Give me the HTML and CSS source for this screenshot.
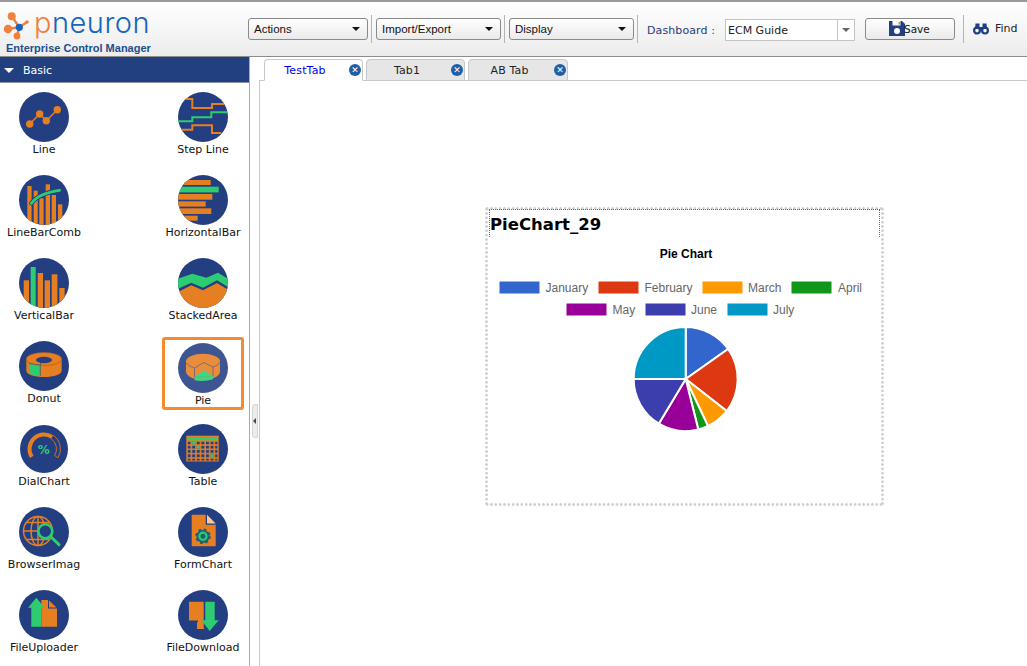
FILE: index.html
```html
<!DOCTYPE html>
<html lang="en">
<head>
<meta charset="utf-8">
<title>pneuron Enterprise Control Manager</title>
<link rel="stylesheet" href="styles.css">
</head>
<body>
<header class="topbar">
  <div class="brand">
    <div class="logo">
      <svg class="logo-mark" viewBox="0 0 32 36" width="32" height="36">
        <g stroke="#f0803c" stroke-width="2.4" fill="none">
          <path d="M11.7 12.3 19.3 23.3M8 25 19.3 23.3M17 32 19.3 23.3M27 18 19.3 23.3"/>
        </g>
        <circle cx="11.7" cy="12.3" r="4" fill="#f0803c"/>
        <circle cx="8" cy="25" r="4.2" fill="#f0803c"/>
        <circle cx="17" cy="32" r="3.4" fill="#f0803c"/>
        <circle cx="27" cy="18" r="1.8" fill="#f0803c"/>
        <circle cx="19.3" cy="23.3" r="3.6" fill="#1565c0"/>
      </svg>
      <span class="logo-word"><span class="logo-p">p</span>neuron</span>
    </div>
    <div class="brand-sub">Enterprise Control Manager</div>
  </div>
  <div class="tool select w120"><span>Actions</span><i class="caret"></i></div>
  <b class="sep"></b>
  <div class="tool select w125"><span>Import/Export</span><i class="caret"></i></div>
  <b class="sep"></b>
  <div class="tool select w125"><span>Display</span><i class="caret"></i></div>
  <b class="sep"></b>
  <label class="dash-label">Dashboard :</label>
  <div class="combo"><span class="combo-text">ECM Guide</span><span class="combo-btn"><i class="caret gray"></i></span></div>
  <div class="tool save">
    <svg class="save-icon" viewBox="0 0 16 15" width="16" height="15">
      <path d="M0 0H13L16 3V15H0Z" fill="#233f82"/>
      <rect x="3.5" y="0" width="8" height="4.5" fill="#fff"/>
      <rect x="9.5" y="1" width="1.5" height="2.5" fill="#e67e22"/>
      <circle cx="8" cy="10" r="3" fill="#fff"/>
    </svg>
    <span>Save</span>
  </div>
  <b class="sep sep-find"></b>
  <div class="find">
    <svg viewBox="0 0 16 13" width="16" height="13">
      <g fill="none" stroke="#233f82" stroke-width="2.2">
        <circle cx="4" cy="8.6" r="2.9"/>
        <circle cx="12" cy="8.6" r="2.9"/>
      </g>
      <path d="M2.5 1.5H6.5V7H2ZM9.5 1.5H13.5L14 7H9.5Z M6 5H10V8.5H6Z" fill="#233f82"/>
    </svg>
    <span>Find</span>
  </div>
</header>

<div class="body">
  <aside class="sidebar">
    <div class="panel-head"><i class="caret white"></i><span>Basic</span></div>
    <div class="palette">
      <div class="item">
        <svg class="icon" viewBox="0 0 50 50">
          <path d="M10.7 32 20.7 22 27.3 28.7 38.3 17.7" fill="none" stroke="#e67e22" stroke-width="1.5"/>
          <g fill="#e67e22"><circle cx="10.7" cy="32" r="3.7"/><circle cx="20.7" cy="22" r="3.7"/><circle cx="27.3" cy="28.7" r="3.7"/><circle cx="38.3" cy="17.7" r="3.7"/></g>
        </svg>
        <span>Line</span>
      </div>
      <div class="item">
        <svg class="icon" viewBox="0 0 50 50">
          <g fill="none" stroke-width="2">
            <path d="M6.7 7H14.3V16H34V12H50M1.7 37.7H14.3V33.3H34V41H43.3" stroke="#e67e22"/>
            <path d="M0 29.3H14.3V25.3H33.3V20.3H50" stroke="#2ecc71"/>
          </g>
        </svg>
        <span>Step Line</span>
      </div>
      <div class="item">
        <svg class="icon" viewBox="0 0 50 50">
          <g fill="#e67e22">
            <rect x="8.3" y="11" width="4.3" height="39"/><rect x="14.7" y="15.7" width="4" height="35"/><rect x="20.3" y="23.3" width="4.3" height="27"/><rect x="26.7" y="9.3" width="4.3" height="41"/><rect x="32.7" y="20" width="4.3" height="30"/><rect x="39" y="29.3" width="4.3" height="21"/>
          </g>
          <path d="M12.3 28.3Q20 18 40.7 15.3" fill="none" stroke="#233f82" stroke-width="4.4" stroke-linecap="round"/>
          <path d="M12.3 28.3Q20 18 40.7 15.3" fill="none" stroke="#2ecc71" stroke-width="2.8" stroke-linecap="round"/>
        </svg>
        <span>LineBarComb</span>
      </div>
      <div class="item">
        <svg class="icon" viewBox="0 0 50 50">
          <g fill="#e67e22">
            <rect x="5" y="5" width="27.7" height="5"/><rect x="0" y="19" width="34.3" height="5.7"/><rect x="0" y="26.3" width="27.7" height="5.3"/><rect x="0" y="33.3" width="33.3" height="5.7"/><rect x="0" y="40.7" width="19.7" height="5"/>
          </g>
          <rect x="1.7" y="11.7" width="39" height="5.7" fill="#2ecc71"/>
        </svg>
        <span>HorizontalBar</span>
      </div>
      <div class="item">
        <svg class="icon" viewBox="0 0 50 50">
          <g fill="#e67e22">
            <rect x="4.7" y="22.3" width="5.3" height="28"/><rect x="18.7" y="15" width="5.3" height="35"/><rect x="25.7" y="22.3" width="5.3" height="28"/><rect x="32.7" y="16.3" width="5.7" height="34"/><rect x="40.3" y="30" width="5.3" height="20"/>
          </g>
          <rect x="11.7" y="9" width="5" height="41" fill="#2ecc71"/>
        </svg>
        <span>VerticalBar</span>
      </div>
      <div class="item">
        <svg class="icon" viewBox="0 0 50 50">
          <path d="M0 20.7 14.3 15.7 28.3 19.7 40 14.7 50 20.7V29L39 22.3 25 29.7 13.3 24.7 0 30.7Z" fill="#2ecc71"/>
          <path d="M0 34 13.3 27.3 25 32.3 39 25 50 31.7V50H0Z" fill="#e67e22"/>
        </svg>
        <span>StackedArea</span>
      </div>
      <div class="item">
        <svg class="icon" viewBox="0 0 50 50">
          <path d="M7.3 18V29.7C7.3 33 15 36 25 36S42.700 33 42.700 29.700V18Z" fill="#e67e22"/>
          <ellipse cx="25" cy="18" rx="17.700" ry="6.500" fill="#e67e22" stroke="#b8621a" stroke-width=".5"/>
          <ellipse cx="25" cy="19" rx="8" ry="3.300" fill="#233f82"/>
          <path d="M10 22.500 21.300 24V35.300Q14 35 10 31.500Z" fill="#2ecc71"/>
          <path d="M10 22.500 21.300 24 22 21.500M21.300 24V35.300" fill="none" stroke="#233f82" stroke-width=".6"/>
          <path d="M7.300 18C7.300 22 15 24.500 25 24.500S42.700 22 42.700 18" fill="none" stroke="#b8621a" stroke-width=".5"/>
        </svg>
        <span>Donut</span>
      </div>
      <div class="item selected">
        <svg class="icon" viewBox="0 0 50 50">
          <path d="M8 18.300V28.500C8 33 16 37 25 37S42 33 42 28.500V18.300Z" fill="#e67e22"/>
          <ellipse cx="25" cy="18.300" rx="17" ry="7.500" fill="#e67e22"/>
          <path d="M8 19.500C10 22.500 13 24 16.500 25L25.700 19.500 35 24C38 23 41 21.500 42 19" fill="none" stroke="#233f82" stroke-width=".6"/>
          <path d="M16.500 25V34.500M35 24V33.300" fill="none" stroke="#233f82" stroke-width=".6"/>
          <path d="M25.700 27 35 33 35 36.300Q26 39 16.700 37.300V34.300Z" fill="#2ecc71"/>
          <path d="M16.700 34.300 35 33" fill="none" stroke="#27ae60" stroke-width=".5"/>
        </svg>
        <span>Pie</span>
      </div>
      <div class="item">
        <svg class="icon dial" viewBox="0 0 48 48">
          <path d="M11.800 31.900A14.500 14.500 0 0 1 32.100 12" fill="none" stroke="#e67e22" stroke-width="4"/>
          <path d="M33.300 10.400A16.500 16.500 0 0 1 38 32.700L34.600 30.600A12.500 12.500 0 0 0 31 13.600" fill="none" stroke="#e67e22" stroke-width=".8"/>
          <text x="23.700" y="28.800" class="pct">%</text>
        </svg>
        <span>DialChart</span>
      </div>
      <div class="item">
        <svg class="icon" viewBox="0 0 50 50">
          <defs>
            <pattern id="cells" width="4.6" height="4.3" patternUnits="userSpaceOnUse" x="9.6" y="17.500">
              <rect width="3" height="2.8" fill="#233f82"/>
            </pattern>
          </defs>
          <rect x="8.300" y="11.700" width="32.400" height="25.800" fill="#e67e22"/>
          <rect x="9.600" y="13.300" width="29.800" height="3" fill="#2ecc71"/>
          <rect x="9.600" y="17.500" width="29.800" height="19" fill="url(#cells)"/>
          <g fill="#2ecc71"><rect x="14.200" y="17.500" width="3" height="2.800"/><rect x="18.800" y="21.800" width="3" height="2.800"/><rect x="32.600" y="30.400" width="3" height="2.800"/></g>
        </svg>
        <span>Table</span>
      </div>
      <div class="item">
        <svg class="icon" viewBox="0 0 50 50">
          <g fill="none" stroke="#e67e22" stroke-width="1.500">
            <circle cx="19" cy="24" r="14.500"/>
            <ellipse cx="19" cy="24" rx="7" ry="14.500"/>
            <path d="M19 9.500V38.500M4.500 24H33.500M7 15.500H31M7 32.500H31"/>
          </g>
          <circle cx="26.300" cy="24.300" r="7" fill="#233f82" stroke="#2ecc71" stroke-width="2.600"/>
          <path d="M31.500 29.500 40 37.700" stroke="#2ecc71" stroke-width="3" stroke-linecap="round"/>
        </svg>
        <span>BrowserImag</span>
      </div>
      <div class="item">
        <svg class="icon" viewBox="0 0 50 50">
          <path d="M13.700 7.700H27.700V17.700H37.700V39.300H13.700Z" fill="#e67e22"/>
          <path d="M29 7.700 37.700 16.500H29Z" fill="#f5c9a0"/>
          <circle cx="25" cy="29.300" r="6.500" fill="#1d5f73" stroke="#1d5f73" stroke-width="2.600" stroke-dasharray="2.500 2.600"/>
          <circle cx="25" cy="29.300" r="3.600" fill="none" stroke="#2ecc71" stroke-width="2.200"/>
        </svg>
        <span>FormChart</span>
      </div>
      <div class="item">
        <svg class="icon" viewBox="0 0 50 50">
          <path d="M22.300 10H29V18.500H38V36.700H22.300Z" fill="#e67e22"/>
          <path d="M30 10.500 37.500 17.500H30Z" fill="#e67e22"/>
          <path d="M17.300 7.700 25.700 17.700H22.300V36.700H12.300V17.700H9Z" fill="#2ecc71"/>
        </svg>
        <span>FileUploader</span>
      </div>
      <div class="item">
        <svg class="icon" viewBox="0 0 50 50">
          <path d="M11 11.700H25.700V38.700H20V30.500H11Z" fill="#e67e22"/>
          <path d="M19 31.500 26.500 39H19Z" fill="#e67e22"/>
          <path d="M27.300 11.700H36.700V30.300H40.700L31.700 41 23.300 30.300H27.300Z" fill="#2ecc71"/>
        </svg>
        <span>FileDownload</span>
      </div>
    </div>
  </aside>

  <div class="gutter">
    <div class="collapse"><i class="caret-left"></i></div>
  </div>

  <main class="main">
    <nav class="tabs">
      <div class="tab active"><span class="tab-label">TestTab</span><span class="close">✕</span></div>
      <div class="tab"><span class="tab-label">Tab1</span><span class="close">✕</span></div>
      <div class="tab"><span class="tab-label">AB Tab</span><span class="close">✕</span></div>
    </nav>
    <div class="canvas">
      <section class="widget">
        <h2 class="widget-title">PieChart_29</h2>
        <svg class="chart" viewBox="489 237 392 265" width="392" height="265">
          <text x="686" y="258" class="chart-title">Pie Chart</text>
          <g class="legend">
            <rect x="499.500" y="281.500" width="40" height="12" fill="#3366cc"/><text x="545.500" y="292">January</text>
            <rect x="598.500" y="281.500" width="40" height="12" fill="#dc3912"/><text x="644.500" y="292">February</text>
            <rect x="702.500" y="281.500" width="40" height="12" fill="#ff9900"/><text x="748" y="292">March</text>
            <rect x="791.500" y="281.500" width="40" height="12" fill="#109618"/><text x="838" y="292">April</text>
            <rect x="566.500" y="303.500" width="40" height="12" fill="#990099"/><text x="612.500" y="314">May</text>
            <rect x="645.500" y="303.500" width="40" height="12" fill="#3b3eac"/><text x="691" y="314">June</text>
            <rect x="727.500" y="303.500" width="40" height="12" fill="#0099c6"/><text x="773" y="314">July</text>
          </g>
          <g transform="translate(685.700 379)" stroke="#fff" stroke-width="2">
            <path d="M0 0V-52A52 52 0 0 1 42.400 -30Z" fill="#3366cc"/>
            <path d="M0 0 42.400 -30A52 52 0 0 1 41 32Z" fill="#dc3912"/>
            <path d="M0 0 41 32A52 52 0 0 1 22.300 47Z" fill="#ff9900"/>
            <path d="M0 0 22.300 47A52 52 0 0 1 12.600 50.500Z" fill="#109618"/>
            <path d="M0 0 12.600 50.500A52 52 0 0 1 -26.800 44.600Z" fill="#990099"/>
            <path d="M0 0 -26.800 44.600A52 52 0 0 1 -52 0Z" fill="#3b3eac"/>
            <path d="M0 0H-52A52 52 0 0 1 0 -52Z" fill="#0099c6"/>
          </g>
        </svg>
      </section>
    </div>
  </main>
</div>
</body>
</html>
```
FILE: styles.css
```css
* { box-sizing: border-box; }
html, body { margin: 0; height: 100%; }
body {
  width: 1027px;
  height: 666px;
  overflow: hidden;
  background: #fff;
  font-family: "DejaVu Sans", sans-serif;
  font-size: 11px;
  color: #111;
  display: flex;
  flex-direction: column;
}

/* top bar */
.topbar {
  height: 57px;
  flex: none;
  display: flex;
  align-items: center;
  border-top: 2px solid #9a9a9a;
  border-bottom: 1px solid #8c8c8c;
  background: linear-gradient(#fff, #ececec);
  padding-bottom: 1px;
}
.brand {
  width: 248px;
  flex: none;
  align-self: stretch;
  display: flex;
  flex-direction: column;
}
.logo { display: flex; height: 41px; align-items: flex-start; }
.logo-mark { margin-top: 2px; flex: none; }
.logo-word {
  font-family: Inter, sans-serif;
  font-weight: 300;
  font-size: 29px;
  line-height: 34px;
  letter-spacing: 0.5px;
  color: #1565c0;
  margin-left: 2px;
  margin-top: 4px;
}
.logo-p { color: #f0803c; }
.brand-sub {
  font-family: "Liberation Sans", sans-serif;
  font-weight: bold;
  font-size: 11px;
  line-height: 14px;
  color: #1d4f8c;
  padding-left: 6px;
}
.tool {
  height: 22px;
  border: 1px solid #8a8a8a;
  border-radius: 3px;
  background: linear-gradient(#fff, #eaeaea);
  font-family: "Liberation Sans", sans-serif;
  font-size: 11.5px;
  flex: none;
}
.select {
  display: flex;
  align-items: center;
  justify-content: space-between;
  padding: 0 7px 0 5px;
}
.w120 { width: 120px; }
.w125 { width: 125px; }
.caret {
  display: block;
  width: 0;
  height: 0;
  border-left: 4px solid transparent;
  border-right: 4px solid transparent;
  border-top: 4px solid #111;
}
.caret.gray { border-top-color: #666; }
.caret.white {
  border-left-width: 5px;
  border-right-width: 5px;
  border-top: 5px solid #fff;
}
.sep {
  flex: none;
  width: 1px;
  height: 28px;
  background: #b4b4b4;
  margin: 0 4px 0 3px;
}
.dash-label {
  margin: 4px 0 0 5px;
  width: 78px;
  color: #2b3a78;
  letter-spacing: 0.1px;
  flex: none;
}
.combo {
  width: 130px;
  height: 22px;
  margin-top: 2px;
  display: flex;
  border: 1px solid #c4c4c4;
  background: #fff;
  flex: none;
}
.combo-text { flex: 1; line-height: 21px; padding-left: 2px; color: #222; }
.combo-btn {
  width: 17px;
  border-left: 1px solid #c4c4c4;
  display: flex;
  align-items: center;
  justify-content: center;
}
.save {
  width: 90px;
  margin-left: 10px;
  display: flex;
  align-items: center;
  padding-left: 23px;
  font-family: "DejaVu Sans", sans-serif;
  font-size: 10.5px;
}
.save-icon { flex: none; margin-right: -1px; }
.sep-find { margin: 0 0 0 8px; }
.find {
  display: flex;
  align-items: center;
  gap: 6px;
  margin-left: 9px;
  color: #222;
}

/* body */
.body { flex: 1; display: flex; min-height: 0; }
.sidebar {
  width: 250px;
  flex: none;
  border-right: 1px solid #a9a9b0;
}
.panel-head {
  height: 26px;
  background: #223f80;
  border-bottom: 1px solid #8c93a8;
  color: #fff;
  display: flex;
  align-items: center;
  gap: 9px;
  padding: 2px 0 0 4px;
  font-size: 11px;
}
.palette {
  display: grid;
  grid-template-columns: 82px 82px;
  column-gap: 77px;
  row-gap: 10px;
  padding: 5px 0 0 3px;
}
.item {
  height: 73px;
  border: 3px solid transparent;
  border-radius: 3px;
  padding-top: 1px;
  display: flex;
  flex-direction: column;
  align-items: center;
  line-height: 14px;
  white-space: nowrap;
}
.item span { margin-top: 1px; }
.icon {
  width: 50px;
  height: 50px;
  flex: none;
  border-radius: 50%;
  background: #233f82;
  overflow: hidden;
  display: block;
}
.icon.dial { width: 48px; height: 48px; margin: 1px 0 1px; }
.item.selected { border-color: #f58a2e; padding-top: 3px; }
.item.selected .icon { opacity: 0.88; }
.pct {
  font-family: "DejaVu Sans", sans-serif;
  font-weight: bold;
  font-size: 12px;
  fill: #2ecc71;
  text-anchor: middle;
}

/* splitter */
.gutter { width: 9px; flex: none; position: relative; }
.collapse {
  position: absolute;
  left: 2px;
  top: 347px;
  width: 6px;
  height: 34px;
  background: #ececec;
  border: 1px solid #d4d4d4;
  border-radius: 3px 0 0 3px;
  display: flex;
  align-items: center;
}
.caret-left {
  display: block;
  width: 0;
  height: 0;
  border-top: 3px solid transparent;
  border-bottom: 3px solid transparent;
  border-right: 3px solid #444;
}

/* main */
.main {
  flex: 1;
  min-width: 0;
  display: flex;
  flex-direction: column;
}
.tabs {
  height: 24px;
  flex: none;
  display: flex;
  gap: 3px;
  align-items: flex-end;
  padding-left: 5px;
  border-bottom: 1px solid #c8c8c8;
  position: relative;
}
.tab {
  width: 99px;
  height: 22px;
  margin-bottom: -1px;
  border: 1px solid #c8c8c8;
  border-radius: 4px 4px 0 0;
  background: #e6e6e6;
  display: flex;
  align-items: center;
  padding-right: 1px;
  color: #222;
  letter-spacing: 0.15px;
}
.tab:nth-child(3) { width: 100px; }
.tab.active {
  background: #fff;
  border-bottom-color: #fff;
  color: #0000ee;
}
.tab-label { flex: 1; text-align: center; padding-right: 4px; }
.close {
  width: 12px;
  height: 12px;
  border-radius: 50%;
  background: #1f5fa6;
  color: #fff;
  font-size: 9px;
  font-weight: bold;
  line-height: 12px;
  text-align: center;
  flex: none;
}
.canvas {
  flex: 1;
  position: relative;
  border-left: 1px solid #c8c8c8;
}
.widget {
  position: absolute;
  left: 225px;
  top: 126px;
  width: 399px;
  height: 299px;
  padding: 2px;
  background:
    radial-gradient(circle, #cfcfcf 1.1px, transparent 1.6px) left top / 4.33px 3px repeat-x,
    radial-gradient(circle, #cfcfcf 1.1px, transparent 1.6px) left bottom / 4.33px 3px repeat-x,
    radial-gradient(circle, #cfcfcf 1.1px, transparent 1.6px) left top / 3px 4.33px repeat-y,
    radial-gradient(circle, #cfcfcf 1.1px, transparent 1.6px) right top / 3px 4.33px repeat-y;
}
.widget-title {
  margin: 0 2px 0 2px;
  height: 28px;
  padding: 2px 0 0 0;
  font-size: 16.5px;
  line-height: 26px;
  font-weight: bold;
  color: #000;
  border: 1px dotted #666;
  border-bottom: 0;
}
.chart { display: block; margin-left: 2px; }
.chart-title {
  font-family: "Liberation Sans", sans-serif;
  font-weight: bold;
  font-size: 12px;
  text-anchor: middle;
  fill: #000;
}
.legend text {
  font-family: "Liberation Sans", sans-serif;
  font-size: 12px;
  fill: #666;
}
```
